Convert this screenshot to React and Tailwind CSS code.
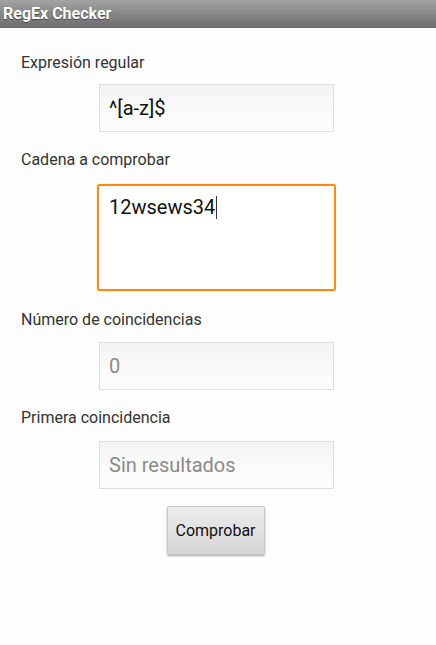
export default function App() {
  const font = { fontFamily: 'Roboto, "Noto Sans", sans-serif' };
  const field = "ml-[99px] w-[235px] h-[48px] border border-[#dedede] bg-gradient-to-b from-[#f3f3f3] via-[#fafafa] to-[#fcfcfc] flex items-center pl-[9px] text-[20px]";
  return (
    <div className="w-[436px] h-[645px] bg-[#fdfdfd] flex flex-col overflow-hidden" style={font}>
      <div className="h-[28px] shrink-0 bg-gradient-to-b from-[#a3a3a3] to-[#6c6c6c] flex items-center pl-[3px]">
        <span className="text-white font-bold text-[16px] leading-none [text-shadow:0_1px_1px_rgba(0,0,0,0.45)]">RegEx Checker</span>
      </div>
      <div className="flex flex-col">
        <div className="mt-[25px] ml-[21px] h-[20px] leading-[20px] text-[16px] text-[#333]">Expresión regular</div>
        <div className={`mt-[11px] ${field} text-[#111]`}>^[a-z]$</div>
        <div className="mt-[18px] ml-[21px] h-[20px] leading-[20px] text-[16px] text-[#333]">Cadena a comprobar</div>
        <div className="mt-[14px] ml-[97px] w-[239px] h-[107px] border-2 border-[#fd8a12] rounded-[3px] bg-white shadow-[0_0_1px_rgba(253,138,18,0.6)] pl-[10px] pt-[8px] text-[20px] text-[#111] leading-[26px] flex items-start">
          <span>12wsews34</span>
          <span className="inline-block w-[1px] h-[23px] bg-[#333] ml-[1px] mt-[2px]"></span>
        </div>
        <div className="mt-[19px] ml-[21px] h-[20px] leading-[20px] text-[16px] text-[#333]">Número de coincidencias</div>
        <div className={`mt-[12px] ${field} text-[#8a8a8a]`}>0</div>
        <div className="mt-[18px] ml-[21px] h-[20px] leading-[20px] text-[16px] text-[#333]">Primera coincidencia</div>
        <div className={`mt-[13px] ${field} text-[#8a8a8a]`}>Sin resultados</div>
        <div className="mt-[17px] flex justify-center">
          <div className="ml-[-5px] w-[98px] h-[49px] rounded-[2px] bg-gradient-to-b from-[#ececec] to-[#d6d6d6] border border-[#c8c8c8] shadow-[0_1px_2px_rgba(0,0,0,0.35)] flex items-center justify-center text-[16px] text-[#111]">Comprobar</div>
        </div>
      </div>
    </div>
  );
}
